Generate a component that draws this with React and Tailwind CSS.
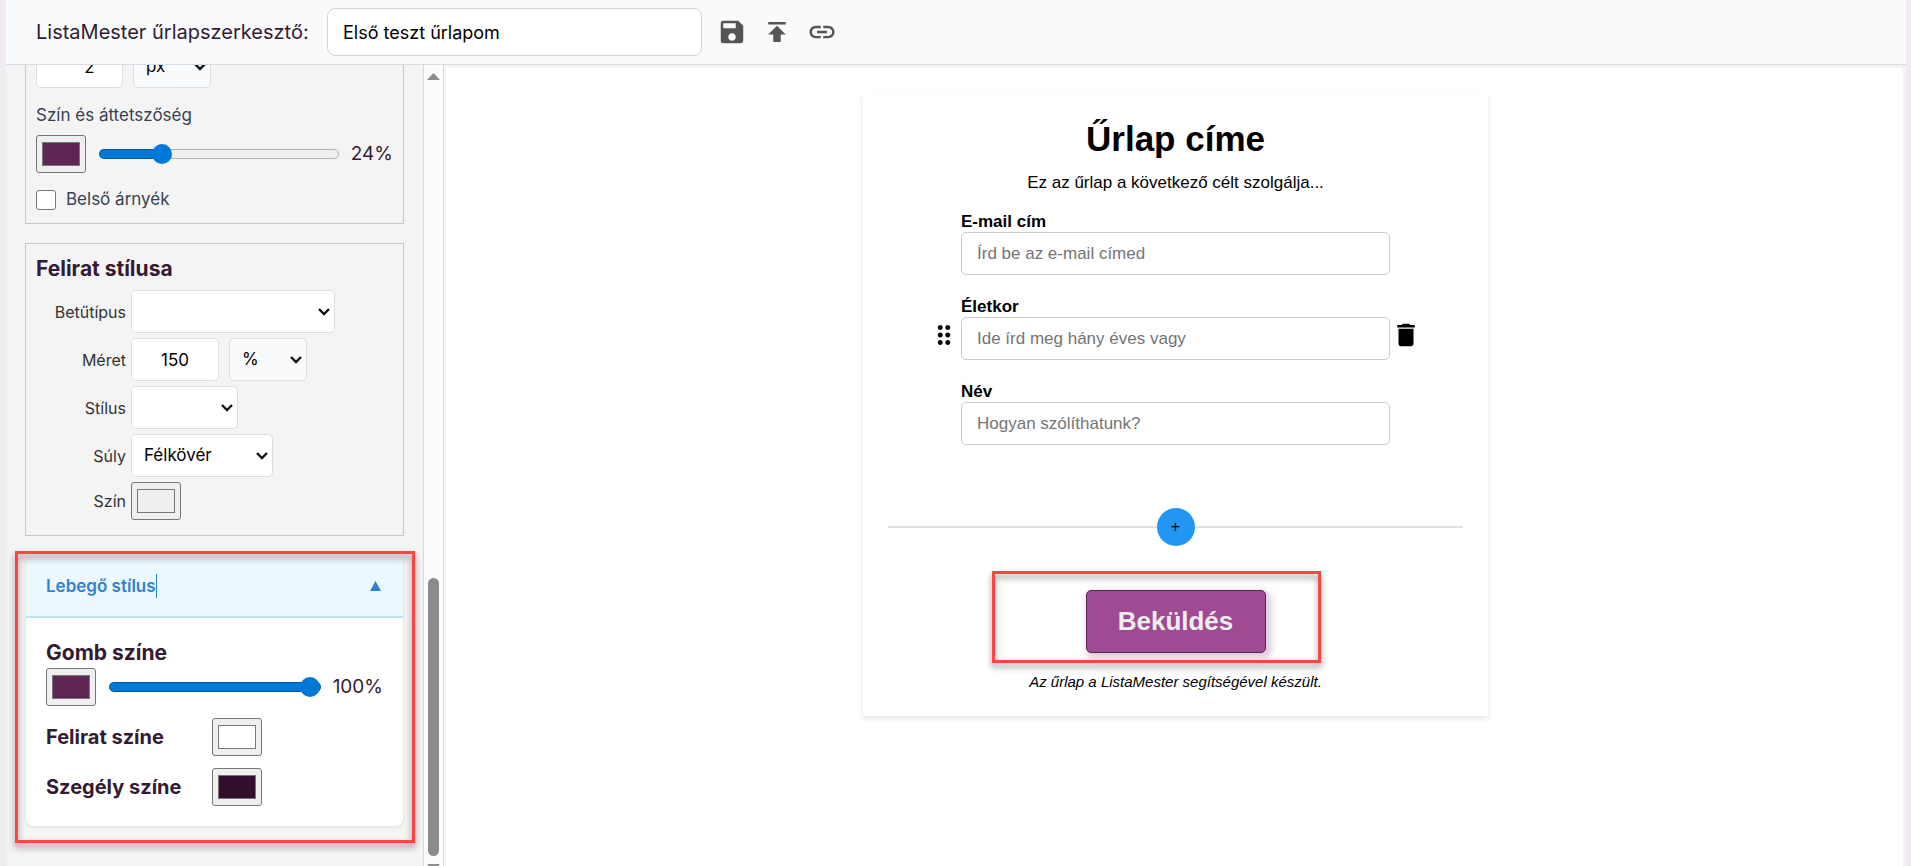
import React, { useState } from 'react';
import { MdSave, MdPublish, MdLink, MdDragIndicator, MdDelete } from 'react-icons/md';

const fields = [
  { id: 'email', label: 'E-mail cím', placeholder: 'Írd be az e-mail címed' },
  { id: 'age', label: 'Életkor', placeholder: 'Ide írd meg hány éves vagy', active: true },
  { id: 'name', label: 'Név', placeholder: 'Hogyan szólíthatunk?' },
];

const toolbar = [
  { label: 'Mentés', icon: <MdSave size={30} /> },
  { label: 'Közzététel', icon: <MdPublish size={30} /> },
  { label: 'Hivatkozás', icon: <MdLink size={30} /> },
];

function Select({ label, id, options, className, tone = 'bg-white' }) {
  return (
    <div className={`relative ${className}`}>
      <select
        id={id}
        aria-label={label}
        className={`h-[43px] w-full appearance-none rounded-[5px] border border-[#dcdfe2] pl-3 pr-8 text-[17px] text-black ${tone}`}
      >
        {options.map((o) => (
          <option key={o}>{o}</option>
        ))}
      </select>
      <svg
        className="pointer-events-none absolute right-[5px] top-[18px] h-2 w-3"
        viewBox="0 0 12 8"
        fill="none"
        stroke="#111"
        strokeWidth="2.4"
      >
        <path d="M1 1l5 5 5-5" />
      </svg>
    </div>
  );
}

function ColorInput({ label, id, value }) {
  const [color, setColor] = useState(value);
  return (
    <input
      type="color"
      id={id}
      aria-label={label}
      value={color}
      onChange={(e) => setColor(e.target.value)}
      className="h-[38px] w-[50px] shrink-0 rounded-[3px] border border-[#767676] bg-[#efefef] px-[3px] py-[2px]"
    />
  );
}

function Slider({ label, value }) {
  const [amount, setAmount] = useState(value);
  return (
    <>
      <input
        type="range"
        aria-label={label}
        value={amount}
        onChange={(e) => setAmount(e.target.value)}
        style={{ '--fill': `${amount}%` }}
        className="ml-[13px] mr-3 h-5 w-0 flex-1 appearance-none bg-transparent [&::-webkit-slider-runnable-track]:h-[10px] [&::-webkit-slider-runnable-track]:rounded-full [&::-webkit-slider-runnable-track]:border [&::-webkit-slider-runnable-track]:border-black/25 [&::-webkit-slider-runnable-track]:bg-[linear-gradient(to_right,#0078d7_var(--fill),#efefef_var(--fill))] [&::-webkit-slider-runnable-track]:bg-origin-border [&::-webkit-slider-thumb]:-mt-[6px] [&::-webkit-slider-thumb]:size-5 [&::-webkit-slider-thumb]:appearance-none [&::-webkit-slider-thumb]:rounded-full [&::-webkit-slider-thumb]:bg-[#0078d7]"
      />
      <span className="text-[19px]">{amount}%</span>
    </>
  );
}

function ShadowPanel() {
  return (
    <section className="-mt-5 border border-t-0 border-[#c8c8c8] px-[10px] pb-[13px]">
      <div className="flex gap-[10px]">
        <input
          type="text"
          aria-label="Elmosás"
          defaultValue="2"
          className="h-[43px] w-[87px] rounded-[5px] border border-[#dcdfe2] bg-white pl-5 text-center text-[17px] text-black"
        />
        <Select label="Mértékegység" options={['px', '%']} className="w-[78px]" tone="bg-[#f8fafc]" />
      </div>
      <p className="mb-2 mt-[15px] text-[17px] leading-6 text-[#374151]">Szín és áttetszőség</p>
      <div className="flex items-center">
        <ColorInput label="Árnyék színe" value="#5e2555" />
        <Slider label="Áttetszőség" value={24} />
      </div>
      <label className="mt-[17px] flex h-5 items-center gap-[10px] text-[17px] text-[#374151]">
        <input
          type="checkbox"
          className="size-5 appearance-none rounded-[3px] border border-[#767676] bg-white checked:bg-[#0078d7]"
        />
        Belső árnyék
      </label>
    </section>
  );
}

function LabelPanel() {
  return (
    <section className="mt-[19px] border border-[#c8c8c8] px-[10px] pb-[15px] pt-[10px]">
      <h2 className="mb-[6px] text-[21px] font-bold leading-[30px]">Felirat stílusa</h2>
      <div className="grid grid-cols-[90px_1fr] items-center gap-[5px] [&>label]:text-right [&>label]:text-[16px] [&>label]:text-[#333]">
        <label htmlFor="font">Betűtípus</label>
        <Select id="font" options={['', 'Arial', 'Verdana']} className="w-[204px]" />
        <label htmlFor="size">Méret</label>
        <div className="flex gap-[10px]">
          <input
            id="size"
            type="text"
            defaultValue="150"
            className="h-[43px] w-[88px] rounded-[5px] border border-[#dcdfe2] bg-white text-center text-[17px] text-black"
          />
          <Select label="Mértékegység" options={['%', 'px']} className="w-[78px]" tone="bg-[#f8fafc]" />
        </div>
        <label htmlFor="style">Stílus</label>
        <Select id="style" options={['', 'Dőlt']} className="w-[107px]" />
        <label htmlFor="weight">Súly</label>
        <Select id="weight" options={['Félkövér', 'Normál']} className="w-[142px]" />
        <label htmlFor="color">Szín</label>
        <ColorInput id="color" value="#eeeeee" />
      </div>
    </section>
  );
}

// red frame used to call attention to a part of the page
function Highlight({ className }) {
  return (
    <div
      className={`pointer-events-none absolute border-[3px] border-[#ff4444] drop-shadow-[0_4px_3px_rgba(0,0,0,0.45)] ${className}`}
    />
  );
}

function HoverPanel() {
  return (
    <section className="relative mt-[19px]">
      <div className="overflow-hidden rounded-lg border border-t-0 border-[#e2e8f0] bg-white shadow-xs">
        <button className="flex h-[63px] w-full items-center justify-between border-b-2 border-[#bee3f8] bg-[#ebf8ff] pl-5 pr-[22px] text-[#3182ce]">
          <span className="border-r border-[#3182ce] text-[17px] font-semibold leading-6">Lebegő stílus</span>
          <svg className="h-[10px] w-[11px]" viewBox="0 0 11 10" fill="currentColor">
            <path d="M5.500 0L11 10H0z" />
          </svg>
        </button>
        <div className="px-5 py-5">
          <h3 className="text-[21px] font-bold leading-[30px]">Gomb színe</h3>
          <div className="flex items-center">
            <ColorInput label="Gomb színe" value="#5e2555" />
            <Slider label="Gomb áttetszősége" value={100} />
          </div>
          <div className="mt-3 grid grid-cols-[166px_1fr] items-center gap-y-3 text-[20px] font-bold">
            <label htmlFor="hover-text">Felirat színe</label>
            <ColorInput id="hover-text" value="#ffffff" />
            <label htmlFor="hover-border">Szegély színe</label>
            <ColorInput id="hover-border" value="#320f2c" />
          </div>
        </div>
      </div>
      <Highlight className="-bottom-4 -left-[10px] -right-[11px] -top-1" />
    </section>
  );
}

function Scrollbar() {
  return (
    <div className="flex w-[21px] shrink-0 flex-col items-center border-x border-[#d9d9d9] bg-[#fcfcfc] pt-2 text-[#8b8b8b]">
      <svg className="h-[7px] w-[13px] shrink-0" viewBox="0 0 13 7" fill="currentColor">
        <path d="M6.500 0L13 7H0z" />
      </svg>
      <div className="flex-1" />
      <div className="h-[278px] w-[11px] shrink-0 rounded-full bg-[#8b8b8b]" />
      <div className="mt-2 h-[2px] shrink-0 overflow-hidden">
        <svg className="h-[7px] w-[13px]" viewBox="0 0 13 7" fill="currentColor">
          <path d="M0 0H13L6.500 7z" />
        </svg>
      </div>
    </div>
  );
}

function FormField({ field }) {
  return (
    <div className="flex items-center justify-center">
      <div className="w-[31px] shrink-0 pb-[6px]">
        {field.active && (
          <button aria-label="Mozgatás" className="block">
            <MdDragIndicator size={30} />
          </button>
        )}
      </div>
      <div
        className={`w-full max-w-[431px] border border-dashed pb-[19px] ${field.active ? 'border-[#fafafa]' : 'border-transparent'}`}
      >
        <label htmlFor={field.id} className="block text-[17px] font-bold leading-[21px]">
          {field.label}
        </label>
        <input
          id={field.id}
          type="text"
          placeholder={field.placeholder}
          className="block h-[43px] w-full rounded-[5px] border border-[#ccc] bg-white px-[15px] text-[17px] placeholder:text-[#757575]"
        />
      </div>
      <div className="w-[31px] shrink-0 pb-[6px]">
        {field.active && (
          <button aria-label="Törlés" className="block">
            <MdDelete size={30} />
          </button>
        )}
      </div>
    </div>
  );
}

function FormPreview() {
  return (
    <div className="mx-auto mt-[25px] w-full max-w-[625px] bg-white px-[25px] pb-[22px] pt-6 text-center text-black shadow-[0_3px_6px_rgba(0,0,0,0.1)] [font-family:'Liberation_Sans',Arial,sans-serif]">
      <h1 className="text-[35px] font-bold leading-[44px]">Űrlap címe</h1>
      <p className="mb-[15px] mt-[10px] text-[17px] leading-6">Ez az űrlap a következő célt szolgálja...</p>
      <div className="text-left">
        {fields.map((f) => (
          <FormField key={f.id} field={f} />
        ))}
      </div>
      <div className="mt-[43px] flex items-center">
        <div className="h-[2px] flex-1 bg-[#e0e0e0]" />
        <button aria-label="Új mező" className="size-[38px] rounded-full bg-[#2196f3] text-[16px] leading-none">
          +
        </button>
        <div className="h-[2px] flex-1 bg-[#e0e0e0]" />
      </div>
      <div className="relative mx-auto mt-11 w-fit">
        <button className="block h-[63px] w-[180px] rounded-[5px] border border-[#5e2555] bg-[#9f4a92] text-[26px] font-bold text-[#eee] shadow-[3px_3px_6px_2px_rgba(94,37,85,0.24)]">
          Beküldés
        </button>
        <Highlight className="-bottom-[10px] -left-[94px] -right-[55px] -top-[19px]" />
      </div>
      <p className="mt-[17px] text-[15px] italic leading-6">Az űrlap a ListaMester segítségével készült.</p>
    </div>
  );
}

export default function App() {
  return (
    <div className="h-screen overflow-hidden bg-[#f1ecf1] pl-[6px] pr-[5px] text-[#341a33] [font-family:Inter,'Open_Sans',sans-serif]">
      <div className="flex h-full flex-col bg-[#f4f4f4]">
        <header className="relative flex h-[65px] shrink-0 items-center border-b border-[#d6dde6] bg-[#f8fafc] pl-[30px]">
          <label htmlFor="form-name" className="w-[291px] whitespace-nowrap text-[20px]">
            ListaMester űrlapszerkesztő:
          </label>
          <input
            id="form-name"
            type="text"
            defaultValue="Első teszt űrlapom"
            className="h-12 w-[375px] rounded-lg border border-[#d1d5db] bg-white px-[15px] text-[18px] text-black"
          />
          <div className="ml-[15px] flex gap-[15px] text-[#555]">
            {toolbar.map((t) => (
              <button key={t.label} aria-label={t.label}>
                {t.icon}
              </button>
            ))}
          </div>
        </header>
        <div className="flex min-h-0 flex-1">
          <aside className="flex w-[438px] shrink-0 overflow-hidden">
            <div className="flex-1 px-[19px]">
              <ShadowPanel />
              <LabelPanel />
              <HoverPanel />
            </div>
            <Scrollbar />
          </aside>
          <main className="ml-[2px] mr-[3px] mt-[3px] flex-1 bg-white pl-[2px]">
            <FormPreview />
          </main>
        </div>
      </div>
    </div>
  );
}
